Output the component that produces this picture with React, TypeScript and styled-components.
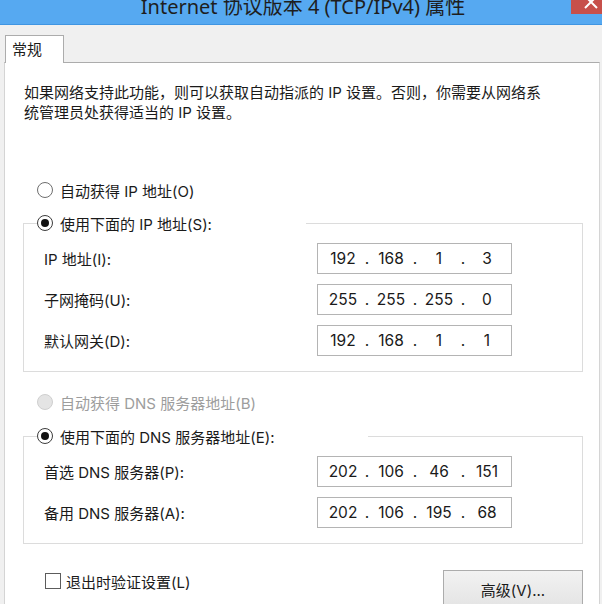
import { Fragment } from "react";
import styled, { createGlobalStyle } from "styled-components";

const GlobalStyle = createGlobalStyle`
  html, body {
    margin: 0;
    padding: 0;
  }
  body {
    background: #f0f0f0;
    font-family: Inter, "Noto Sans CJK SC", sans-serif;
    font-size: 15px;
    color: #1a1a1a;
    overflow: hidden;
  }
`;

const TitleBar = styled.header`
  position: relative;
  height: 24px;
  display: flex;
  justify-content: center;
  overflow: hidden;
  background: #56a9f1;
  border-bottom: 1px solid #3f95e2;
`;

const Title = styled.h1`
  margin: -5px 0 0 4px;
  font-family: "Noto Sans", "Noto Sans CJK SC", sans-serif;
  font-size: 20px;
  font-weight: 400;
  line-height: 24px;
  color: #1e1e1e;
  white-space: nowrap;
`;

const CloseButton = styled.button`
  position: absolute;
  top: 0;
  right: 0;
  width: 31px;
  height: 14px;
  padding: 0;
  border: none;
  background: #c7504b;
  display: block;
`;

const TabStrip = styled.nav`
  display: flex;
  padding: 10px 0 0 5px;
`;

const Tab = styled.div`
  position: relative;
  z-index: 1;
  box-sizing: border-box;
  width: 59px;
  height: 28px;
  margin-bottom: -1px;
  padding: 3px 0 0 6px;
  line-height: 22px;
  background: #fff;
  border: 1px solid #acacac;
  border-bottom: none;
`;

const Panel = styled.main`
  margin: 0 2px 0 4px;
  padding: 20px 0 40px 18px;
  background: #fff;
  border: 1px solid #d4d4d4;
  border-top-color: #acacac;
`;

const Description = styled.p`
  margin: 0;
  padding-left: 1px;
  line-height: 20px;
  white-space: nowrap;
`;

const OptionRow = styled.label<{ $disabled?: boolean; $gap?: number }>`
  display: flex;
  align-items: center;
  gap: 7px;
  height: 22px;
  margin-top: ${(p) => p.$gap ?? 0}px;
  padding-left: 14px;
  color: ${(p) => (p.$disabled ? "#9d9d9d" : "inherit")};
`;

const RadioMark = styled.span<{ $checked?: boolean; $disabled?: boolean }>`
  flex: none;
  box-sizing: border-box;
  width: 16px;
  height: 16px;
  border-radius: 50%;
  display: grid;
  place-items: center;
  border: 1px solid ${(p) => (p.$disabled ? "#cfcfcf" : p.$checked ? "#3c3c3c" : "#6e6e6e")};
  background: ${(p) => (p.$disabled ? "#e4e4e4" : "#fff")};

  &::after {
    content: "";
    display: ${(p) => (p.$checked ? "block" : "none")};
    width: 8px;
    height: 8px;
    border-radius: 50%;
    background: #111;
  }
`;

const GroupBox = styled.fieldset<{ $gap: number }>`
  box-sizing: border-box;
  width: 560px;
  min-width: 0;
  margin: ${(p) => p.$gap}px 0 0;
  padding: 0;
  border: 1px solid #dcdcdc;
`;

const Legend = styled.legend`
  display: flex;
  align-items: center;
  gap: 7px;
  height: 22px;
  margin-left: 13px;
  padding: 0 94px 0 0;
  background: #fff;
`;

const FieldGrid = styled.div`
  display: grid;
  grid-template-columns: 273px 195px;
  row-gap: 10px;
  align-items: center;
  padding: 9px 0 15px 20px;
`;

const FieldLabel = styled.span`
  padding-top: 3px;
  line-height: 22px;
`;

const IpField = styled.div`
  box-sizing: border-box;
  display: flex;
  align-items: center;
  width: 195px;
  height: 31px;
  padding-left: 5px;
  border: 1px solid #b4b4b4;
  background: #fff;
  font-size: 15.5px;
`;

const Octet = styled.span`
  width: 40px;
  text-align: center;
`;

const Dot = styled.span`
  width: 8px;
  text-align: center;
`;

const Footer = styled.div`
  box-sizing: border-box;
  width: 560px;
  margin-top: 26px;
  padding-left: 22px;
  display: flex;
  justify-content: space-between;
  align-items: flex-start;
`;

const CheckRow = styled.label`
  display: flex;
  align-items: center;
  gap: 5px;
  height: 22px;
`;

const CheckMark = styled.span`
  box-sizing: border-box;
  width: 16px;
  height: 16px;
  border: 1px solid #5c5c5c;
  background: #fff;
`;

const PushButton = styled.button`
  box-sizing: border-box;
  width: 140px;
  height: 38px;
  padding: 0;
  border: 1px solid #acacac;
  background: linear-gradient(#f2f2f2, #e4e4e4);
  font: inherit;
  color: #1a1a1a;
`;

type AddressRow = { label: string; value: string[] };

const ipv4: AddressRow[] = [
  { label: "IP 地址(I):", value: ["192", "168", "1", "3"] },
  { label: "子网掩码(U):", value: ["255", "255", "255", "0"] },
  { label: "默认网关(D):", value: ["192", "168", "1", "1"] },
];

const dns: AddressRow[] = [
  { label: "首选 DNS 服务器(P):", value: ["202", "106", "46", "151"] },
  { label: "备用 DNS 服务器(A):", value: ["202", "106", "195", "68"] },
];

function IpInput({ value }: { value: string[] }) {
  return (
    <IpField>
      {value.map((part, i) => (
        <Fragment key={i}>
          {i > 0 && <Dot>.</Dot>}
          <Octet>{part}</Octet>
        </Fragment>
      ))}
    </IpField>
  );
}

function Rows({ rows }: { rows: AddressRow[] }) {
  return (
    <FieldGrid>
      {rows.map((r) => (
        <Fragment key={r.label}>
          <FieldLabel>{r.label}</FieldLabel>
          <IpInput value={r.value} />
        </Fragment>
      ))}
    </FieldGrid>
  );
}

function App() {
  return (
    <>
      <GlobalStyle />
      <TitleBar>
        <Title>Internet 协议版本 4 (TCP/IPv4) 属性</Title>
        <CloseButton aria-label="关闭">
          <svg width="31" height="14" viewBox="0 0 31 14">
            <path d="M14 -4 L26 8 M26 -4 L14 8" stroke="#fff" strokeWidth="2" />
          </svg>
        </CloseButton>
      </TitleBar>

      <TabStrip>
        <Tab>常规</Tab>
      </TabStrip>

      <Panel>
        <Description>
          如果网络支持此功能，则可以获取自动指派的 IP 设置。否则，你需要从网络系
          <br />
          统管理员处获得适当的 IP 设置。
        </Description>

        <OptionRow $gap={56}>
          <RadioMark />
          自动获得 IP 地址(O)
        </OptionRow>

        <GroupBox $gap={11}>
          <Legend>
            <RadioMark $checked />
            使用下面的 IP 地址(S):
          </Legend>
          <Rows rows={ipv4} />
        </GroupBox>

        <OptionRow $gap={19} $disabled>
          <RadioMark $disabled />
          自动获得 DNS 服务器地址(B)
        </OptionRow>

        <GroupBox $gap={12}>
          <Legend>
            <RadioMark $checked />
            使用下面的 DNS 服务器地址(E):
          </Legend>
          <Rows rows={dns} />
        </GroupBox>

        <Footer>
          <CheckRow>
            <CheckMark />
            退出时验证设置(L)
          </CheckRow>
          <PushButton>高级(V)...</PushButton>
        </Footer>
      </Panel>
    </>
  );
}

export default App;
